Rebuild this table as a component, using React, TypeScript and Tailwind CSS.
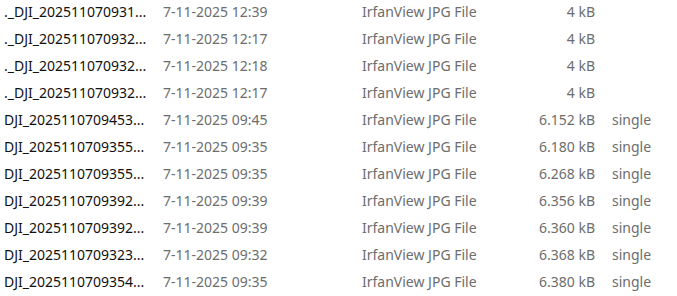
import React from "react";

type Row = { name: string; date: string; size: string; tag?: string };

const rows: Row[] = [
  { name: "._DJI_202511070931...", date: "7-11-2025 12:39", size: "4 kB" },
  { name: "._DJI_202511070932...", date: "7-11-2025 12:17", size: "4 kB" },
  { name: "._DJI_202511070932...", date: "7-11-2025 12:18", size: "4 kB" },
  { name: "._DJI_202511070932...", date: "7-11-2025 12:17", size: "4 kB" },
  { name: "DJI_2025110709453...", date: "7-11-2025 09:45", size: "6.152 kB", tag: "single" },
  { name: "DJI_2025110709355...", date: "7-11-2025 09:35", size: "6.180 kB", tag: "single" },
  { name: "DJI_2025110709355...", date: "7-11-2025 09:35", size: "6.268 kB", tag: "single" },
  { name: "DJI_2025110709392...", date: "7-11-2025 09:39", size: "6.356 kB", tag: "single" },
  { name: "DJI_2025110709392...", date: "7-11-2025 09:39", size: "6.360 kB", tag: "single" },
  { name: "DJI_2025110709323...", date: "7-11-2025 09:32", size: "6.368 kB", tag: "single" },
  { name: "DJI_2025110709354...", date: "7-11-2025 09:35", size: "6.380 kB", tag: "single" },
];

const App = () => {
  return (
    <div
      className="w-[677px] h-[296px] overflow-hidden bg-white text-[14px]"
      style={{ fontFamily: '"Noto Sans", "Open Sans", sans-serif' }}
    >
      <div className="-mt-[2px] flex flex-col">
        {rows.map((r, i) => (
          <div key={i} className="flex items-center h-[27px] whitespace-nowrap">
            <div className="w-[163px] pl-[4px] text-[#111111]">{r.name}</div>
            <div className="w-[199px] text-[#6d6d6d]">{r.date}</div>
            <div className="w-[140px] text-[#6d6d6d]">IrfanView JPG File</div>
            <div className="w-[93px] text-right text-[#6d6d6d]">{r.size}</div>
            <div className="pl-[17px] text-[#6d6d6d]">{r.tag}</div>
          </div>
        ))}
      </div>
    </div>
  );
};

export default App;
